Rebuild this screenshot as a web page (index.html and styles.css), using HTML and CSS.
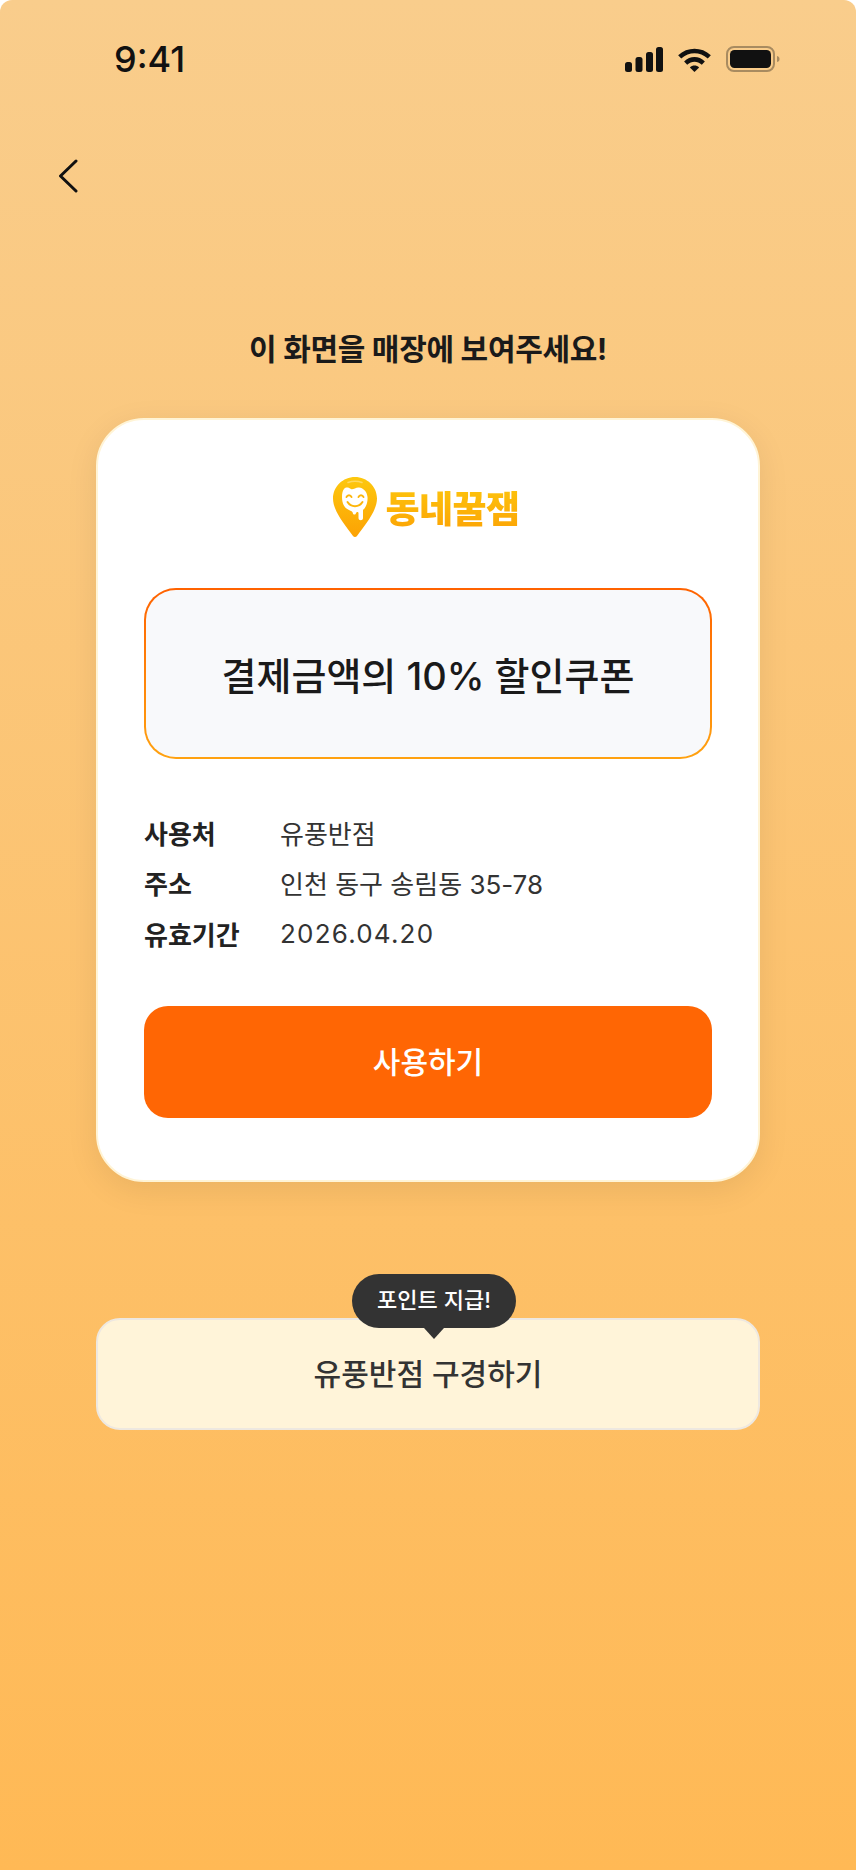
FILE: index.html
```html
<!DOCTYPE html>
<html lang="ko">
<head>
    <meta charset="UTF-8">
    <meta name="viewport" content="width=device-width, initial-scale=1.0">
    <title>쿠폰 사용</title>
    <link rel="stylesheet" href="styles.css">
</head>
<body>
    <div class="screen">
        <div class="statusbar">
            <span class="time">9:41</span>
            <div class="status-icons">
                <svg width="38" height="25" viewBox="0 0 38 25">
                    <rect x="0" y="15" width="7" height="10" rx="2.5" fill="#111"/>
                    <rect x="10.500" y="10" width="7" height="15" rx="2.5" fill="#111"/>
                    <rect x="21" y="5" width="7" height="20" rx="2.5" fill="#111"/>
                    <rect x="31" y="0" width="7" height="25" rx="2.5" fill="#111"/>
                </svg>
                <svg width="35" height="25" viewBox="0 0 36 26">
                    <path d="M1 8.5 C10.5 -0.5 25.5 -0.5 35 8.5 L31.8 12 C23.5 4.500 12.500 4.500 4.200 12 Z" fill="#111"/>
                    <path d="M7.200 15 C13.500 9 22.500 9 28.800 15 L25.600 18.500 C21 14.300 15 14.300 10.400 18.500 Z" fill="#111"/>
                    <path d="M13.200 21.200 C16 18.700 20 18.700 22.800 21.200 L18 26 Z" fill="#111"/>
                </svg>
                <svg width="54" height="26" viewBox="0 0 54 26">
                    <rect x="1" y="1" width="47" height="24" rx="7" fill="none" stroke="#111" stroke-opacity="0.35" stroke-width="2"/>
                    <rect x="4" y="4" width="41" height="18" rx="4.500" fill="#111"/>
                    <path d="M51 10 C53 10.500 53.500 11.500 53.500 13 C53.500 14.500 53 15.500 51 16 Z" fill="#111" fill-opacity="0.35"/>
                </svg>
            </div>
        </div>

        <div class="topnav">
            <svg width="24" height="36" viewBox="0 0 24 36">
                <path d="M22 3 L6.500 18 L22 33" fill="none" stroke="#111" stroke-width="3" stroke-linecap="round" stroke-linejoin="round"/>
            </svg>
        </div>

        <p class="guide">이 화면을 매장에 보여주세요!</p>

        <div class="card">
            <div class="logo">
                <svg width="46" height="62" viewBox="0 0 46 62">
                    <defs>
                        <linearGradient id="pinGrad" x1="0" y1="0" x2="0" y2="1">
                            <stop offset="0" stop-color="#fdc80e"/>
                            <stop offset="1" stop-color="#fca204"/>
                        </linearGradient>
                    </defs>
                    <path d="M23 1 C35 1 45 10.500 45 22.500 C45 35 33 49 25 60 C24 61.300 22 61.300 21 60 C13 49 1 35 1 22.500 C1 10.500 11 1 23 1 Z" fill="url(#pinGrad)"/>
                    <path d="M16 6.500 C20 5 26 5 30 6.500" fill="none" stroke="#fff" stroke-opacity="0.35" stroke-width="1.500" stroke-linecap="round"/>
                    <path d="M12 13 C14 10.500 17 11.500 19 13 C21 14 24 11 27 11.500 C31 12 35 15 35.500 21 C36 27 33.500 32 31 34 L31 42 C31 45 26.500 45 26.500 42 L26.500 37 C26.500 35.500 24.500 35.500 24 37 C23.800 39 21 39 20.800 37 C20.600 35.500 19 35 17 34 C12 32 10 27 10 21 C10 17.500 10.500 15 12 13 Z" fill="#fff"/>
                    <path d="M14.500 21 C15.500 18.500 18.500 18.500 19.500 21 M26.500 21 C27.500 18.500 30.500 18.500 31.500 21 M15.500 26 C19 31.500 27 31.500 30.500 26" fill="none" stroke="#fdb60a" stroke-width="2" stroke-linecap="round"/>
                </svg>
                <span class="logo-text">동네꿀잼</span>
            </div>

            <div class="coupon">
                <span>결제금액의 10% 할인쿠폰</span>
            </div>

            <dl class="info">
                <div class="info-row">
                    <dt>사용처</dt>
                    <dd>유풍반점</dd>
                </div>
                <div class="info-row">
                    <dt>주소</dt>
                    <dd>인천 동구 송림동 35-78</dd>
                </div>
                <div class="info-row">
                    <dt>유효기간</dt>
                    <dd class="date">2026.04.20</dd>
                </div>
            </dl>

            <button class="btn-use">사용하기</button>
        </div>

        <div class="tour">
            <div class="bubble">포인트 지급!</div>
            <button class="btn-tour">유풍반점 구경하기</button>
        </div>
    </div>
</body>
</html>
```

FILE: styles.css
```css
*{
    box-sizing: border-box;
}
html, body{
    margin: 0;
    background: #fff;
}
body{
    font-family: "Inter", "Noto Sans CJK KR", sans-serif;
    color: #111;
}
.screen{
    width: 856px;
    height: 1870px;
    padding-top: 40px;
    border-radius: 12px 12px 0 0;
    background: linear-gradient(180deg, #f9cd8c 0%, #ffb955 100%);
    overflow: hidden;
}
.statusbar{
    display: flex;
    justify-content: space-between;
    align-items: center;
    height: 38px;
    padding: 0 76px 0 114px;
}
.time{
    font-size: 36px;
    font-weight: 500;
    color: #111;
}
.status-icons{
    display: flex;
    align-items: center;
    gap: 14px;
}
.status-icons svg{
    display: block;
}
.topnav{
    height: 36px;
    margin-top: 80px;
    padding-left: 54px;
}
.topnav svg{
    display: block;
}
.guide{
    margin: 131px 0 0;
    height: 48px;
    line-height: 48px;
    text-align: center;
    font-size: 30px;
    font-weight: 700;
    letter-spacing: -0.3px;
    color: #1a1a1a;
}
.card{
    width: 664px;
    height: 764px;
    margin: 45px auto 0;
    padding: 56px 46px 0;
    background: #fff;
    border: 2px solid #fff4d6;
    border-radius: 48px;
    box-shadow: 0 8px 32px rgba(0, 0, 0, 0.08);
}
.logo{
    display: flex;
    justify-content: center;
    align-items: center;
    gap: 7px;
    height: 62px;
}
.logo svg{
    display: block;
}
.logo-text{
    margin-right: 4px;
    font-size: 37px;
    font-weight: 900;
    letter-spacing: -0.5px;
    background: linear-gradient(180deg, #fdc80e, #fca204);
    -webkit-background-clip: text;
    background-clip: text;
    color: transparent;
}
.coupon{
    display: flex;
    justify-content: center;
    align-items: center;
    height: 171px;
    margin-top: 50px;
    background: linear-gradient(#f8f9fb, #f8f9fb) padding-box, linear-gradient(180deg, #ff6200, #ffa210) border-box;
    border: 2px solid transparent;
    border-radius: 32px;
    font-size: 38px;
    font-weight: 500;
    color: #1a1a1a;
}
.info{
    margin: 48px 0 0;
}
.info-row{
    display: flex;
    align-items: center;
    height: 50.5px;
    font-size: 26px;
}
.info-row dt{
    width: 136px;
    font-weight: 700;
    color: #222;
}
.info-row dd{
    margin: 0;
    font-weight: 400;
    color: #333;
}
.info-row .date{
    letter-spacing: 1.2px;
}
.btn-use{
    display: block;
    width: 100%;
    height: 112px;
    margin-top: 47.5px;
    padding-bottom: 6px;
    border: 0;
    border-radius: 24px;
    background: #ff6604;
    color: #fff;
    font: inherit;
    font-size: 30px;
    font-weight: 500;
}
.tour{
    position: relative;
    width: 664px;
    margin: 136px auto 0;
}
.btn-tour{
    display: block;
    width: 100%;
    height: 112px;
    padding-bottom: 5px;
    background: #fff4d9;
    border: 2px solid #eee8e0;
    border-radius: 24px;
    color: #333;
    font: inherit;
    font-size: 30px;
    font-weight: 500;
}
.bubble{
    position: absolute;
    top: -44px;
    left: 256px;
    width: 164px;
    height: 54px;
    line-height: 52px;
    border-radius: 27px;
    background: #333;
    color: #fff;
    text-align: center;
    font-size: 22px;
    font-weight: 500;
}
.bubble::after{
    content: "";
    position: absolute;
    left: 72px;
    top: 54px;
    border-left: 10px solid transparent;
    border-right: 10px solid transparent;
    border-top: 11px solid #333;
}
```
